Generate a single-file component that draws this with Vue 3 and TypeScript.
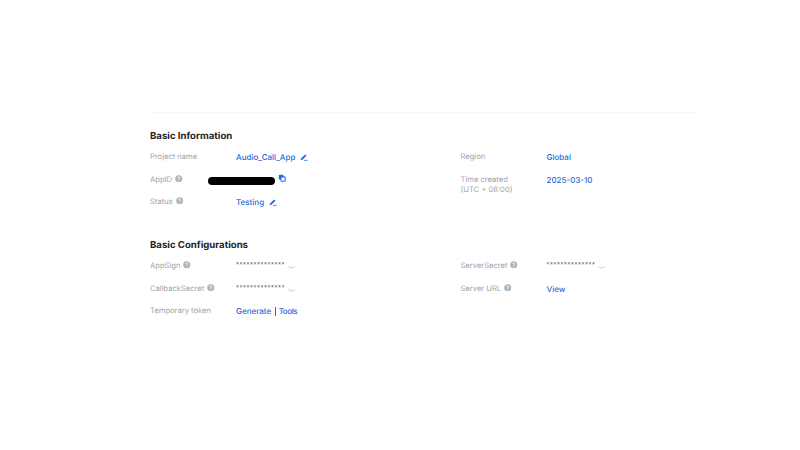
<script setup lang="ts">
/* Project detail panel: basic information and basic configurations. */
interface Field {
  label: string
  note?: string
  help?: boolean
  value?: string
  kind?: 'link' | 'secret' | 'redacted' | 'token'
  edit?: boolean
}

const infoLeft: Field[] = [
  { label: 'Project name', value: 'Audio_Call_App', kind: 'link', edit: true },
  { label: 'AppID', help: true, kind: 'redacted' },
  { label: 'Status', help: true, value: 'Testing', kind: 'link', edit: true },
]
const infoRight: Field[] = [
  { label: 'Region', value: 'Global', kind: 'link' },
  { label: 'Time created', note: '(UTC + 08:00)', value: '2025-03-10', kind: 'link' },
]
const configLeft: Field[] = [
  { label: 'AppSign', help: true, kind: 'secret' },
  { label: 'CallbackSecret', help: true, kind: 'secret' },
  { label: 'Temporary token', kind: 'token' },
]
const configRight: Field[] = [
  { label: 'ServerSecret', help: true, kind: 'secret' },
  { label: 'Server URL', help: true, value: 'View', kind: 'link' },
]

const sections = [
  { title: 'Basic Information', left: infoLeft, right: infoRight },
  { title: 'Basic Configurations', left: configLeft, right: configRight },
]
</script>

<template>
  <div class="page">
    <div class="rule"></div>
    <section v-for="s in sections" :key="s.title" class="section">
      <h2>{{ s.title }}</h2>
      <div class="columns">
        <div v-for="(col, i) in [s.left, s.right]" :key="i" class="col">
          <div v-for="f in col" :key="f.label" class="row">
            <div class="label">
              <span>{{ f.label }}</span>
              <svg v-if="f.help" class="help" viewBox="0 0 8 8">
                <circle cx="4" cy="4" r="3.8" fill="#b0b3b8" />
                <path d="M2.9 3.2a1.1 1.1 0 1 1 1.7.9c-.4.3-.6.4-.6.9" fill="none" stroke="#fff" stroke-width=".8" />
                <circle cx="4" cy="6.2" r=".5" fill="#fff" />
              </svg>
              <div v-if="f.note">{{ f.note }}</div>
            </div>
            <div class="value">
              <template v-if="f.kind === 'link'">
                <a>{{ f.value }}</a>
                <svg v-if="f.edit" class="edit" viewBox="0 0 10 10">
                  <path d="M1 7.2 6.4 1.8l1.7 1.7L2.7 8.9H1z" fill="#1f6cdc" />
                  <path d="M5 9.2h4.4" stroke="#1f6cdc" stroke-width="1" />
                </svg>
              </template>
              <template v-else-if="f.kind === 'redacted'">
                <span class="blackout"></span>
                <svg class="copy" viewBox="0 0 10 10">
                  <rect x="1" y="1" width="5.8" height="5.8" rx="1" fill="#1f6cdc" />
                  <rect x="3.6" y="3.6" width="5.4" height="5.4" rx="1" fill="#fff" stroke="#1f6cdc" stroke-width="1.3" />
                </svg>
              </template>
              <template v-else-if="f.kind === 'secret'">
                <span class="stars">**************</span>
                <svg class="eye" viewBox="0 0 10 6">
                  <path d="M1 1.4c2 2.6 6 2.6 8 0" fill="none" stroke="#b4b7bc" stroke-width=".8" />
                  <path d="M2.2 3 1.6 4M5 3.6V4.8M7.8 3l.6 1" stroke="#c9ccd0" stroke-width=".6" />
                </svg>
              </template>
              <template v-else>
                <a>Generate</a><span class="sep"></span><a class="tools">Tools</a>
              </template>
            </div>
          </div>
        </div>
      </div>
    </section>
  </div>
</template>

<style>
html, body { margin: 0; background: #fff; }
</style>

<style scoped>
.page {
  width: 800px;
  height: 450px;
  box-sizing: border-box;
  padding: 112px 105px 0 150px;
  overflow: hidden;
  font-family: Inter, "Open Sans", sans-serif;
  font-size: 7.6px;
  line-height: 10px;
  color: #a1a5ab;
  text-rendering: geometricPrecision;
}
.rule {
  height: 1px;
  background: #f6f6f7;
}
.section {
  padding-top: 17px;
  height: 92px;
}
h2 {
  margin: 0 0 8px;
  font-size: 9.6px;
  line-height: 13px;
  font-weight: 700;
  color: #20232b;
}
.columns {
  display: grid;
  grid-template-columns: 310.5px 1fr;
}
.row {
  display: grid;
  grid-template-columns: 86px 1fr;
  min-height: 22.5px;
  align-items: start;
  padding-top: 1px;
  box-sizing: border-box;
}
.label svg {
  margin-left: 3px;
}
.help {
  width: 7.5px;
  height: 7.5px;
  vertical-align: top;
}
.value {
  display: flex;
  align-items: center;
  height: 10px;
  color: #1f6cdc;
  font-size: 8px;
  font-weight: 500;
}
.tools {
  margin-left: -0.5px;
  letter-spacing: -0.4px;
}
.edit {
  width: 8px;
  height: 8px;
  margin-left: 5px;
}
.copy {
  width: 8px;
  height: 8px;
  margin: -3px 0 0 3px;
}
.blackout {
  width: 67px;
  height: 8px;
  margin: 3px 0 0 -28px;
  border-radius: 4px;
  background: #000;
}
.stars {
  color: #50545c;
  font-size: 7.4px;
  letter-spacing: 0.62px;
  font-family: "Liberation Sans", sans-serif;
  margin-top: -2px;
}
.eye {
  width: 9px;
  height: 5px;
  margin-left: 2px;
  margin-top: 3px;
}
.sep {
  width: 1px;
  height: 9px;
  margin: 0 3.5px;
  background: #1f6cdc;
}
</style>
